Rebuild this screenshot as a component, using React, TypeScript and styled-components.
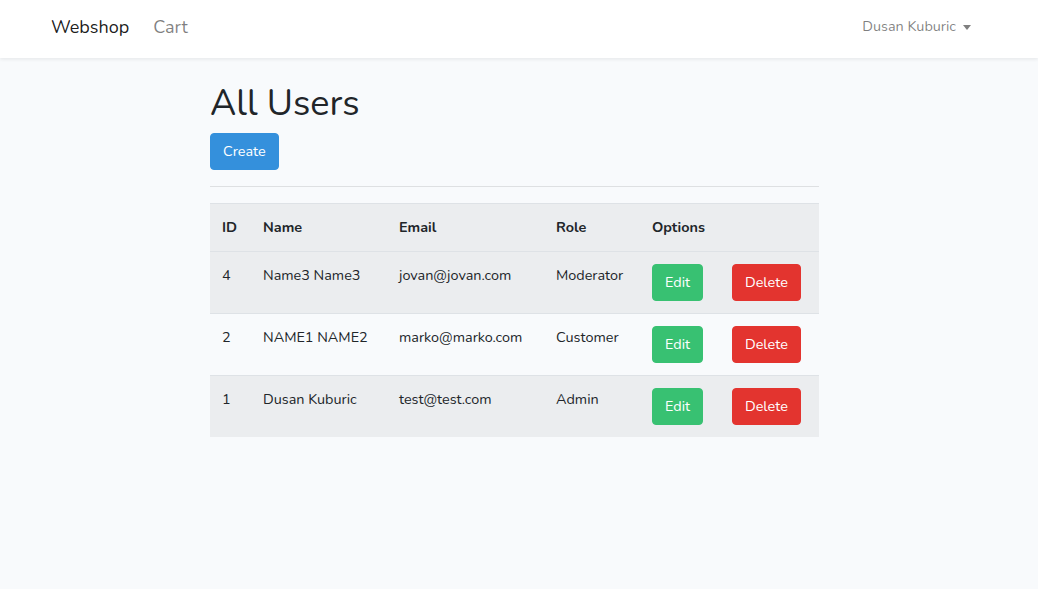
import React from "react";
import styled, {createGlobalStyle} from "styled-components";

const GlobalStyle = createGlobalStyle`
  html, body {
    margin: 0;
    padding: 0;
    background: #f8fafc;
    font-family: "Nunito", Lato, "Open Sans", sans-serif;
    font-size: 14.4px;
    line-height: 1.6;
    color: #212529;
  }
  * {
    box-sizing: border-box;
  }
`

interface IUser {
  id: number;
  name: string;
  email: string;
  role: string;
}

const users: IUser[] = [
  {id: 4, name: "Name3 Name3", email: "jovan@jovan.com", role: "Moderator"},
  {id: 2, name: "NAME1 NAME2", email: "marko@marko.com", role: "Customer"},
  {id: 1, name: "Dusan Kuburic", email: "test@test.com", role: "Admin"},
];

const columns = [41, 136, 157, 96, 80, 99];

const App = () => {
  return (
    <>
      <GlobalStyle/>
      <Navbar>
        <NavLeft>
          <Brand href="/">Webshop</Brand>
          <NavBig href="/">Cart</NavBig>
        </NavLeft>
        <UserMenu>
          Dusan Kuburic
          <Caret/>
        </UserMenu>
      </Navbar>
      <Main>
        <Content>
          <Title>All Users</Title>
          <Button variant="primary">Create</Button>
          <Divider/>
          <Table>
            <colgroup>
              {columns.map((w, i) => <col key={i} style={{width: w}}/>)}
            </colgroup>
            <thead>
              <tr>
                <Th>ID</Th>
                <Th>Name</Th>
                <Th>Email</Th>
                <Th>Role</Th>
                <Th>Options</Th>
                <Th/>
              </tr>
            </thead>
            <tbody>
              {users.map((u, i) => (
                <Row key={u.id} striped={i % 2 === 0}>
                  <Td>{u.id}</Td>
                  <Td>{u.name}</Td>
                  <Td>{u.email}</Td>
                  <Td>{u.role}</Td>
                  <Td><Button variant="success">Edit</Button></Td>
                  <Td><Button variant="danger">Delete</Button></Td>
                </Row>
              ))}
            </tbody>
          </Table>
        </Content>
      </Main>
    </>
  )
}

export default App;


const Navbar = styled.nav`
  height: 58px;
  background: #fff;
  box-shadow: 0 0.125rem 0.25rem rgba(0, 0, 0, 0.075);
  display: flex;
  align-items: center;
  justify-content: space-between;
  padding: 0 67px 4px 51px;
`

const NavLeft = styled.div`
  display: flex;
  align-items: center;
`

const Brand = styled.a`
  font-size: 18px;
  color: rgba(0, 0, 0, 0.9);
  text-decoration: none;
  margin-right: 24px;
`

const NavBig = styled.a`
  font-size: 18px;
  color: rgba(0, 0, 0, 0.5);
  text-decoration: none;
`

const UserMenu = styled.div`
  display: flex;
  align-items: center;
  color: rgba(0, 0, 0, 0.5);
`

const Caret = styled.span`
  display: inline-block;
  margin-left: 7px;
  margin-top: 1px;
  border-top: 5px solid rgba(0, 0, 0, 0.5);
  border-left: 4.5px solid transparent;
  border-right: 4.5px solid transparent;
`

const Main = styled.main`
  padding: 24px 0;
`

const Content = styled.div`
  width: 609px;
  margin-left: 210px;
`

const Title = styled.h1`
  margin: 0 0 8px;
  font-size: 36px;
  font-weight: 400;
  line-height: 1.2;
`

const colors = {
  primary: "#3490dc",
  success: "#38c172",
  danger: "#e3342f",
}

const Button = styled.button<{variant: keyof typeof colors}>`
  display: inline-block;
  font-family: inherit;
  font-size: 14.4px;
  line-height: 1.6;
  padding: 6px 12px;
  border: 1px solid ${({variant}) => colors[variant]};
  border-radius: 4px;
  background: ${({variant}) => colors[variant]};
  color: #fff;
  cursor: pointer;
`

const Divider = styled.hr`
  margin: 16px 0;
  border: 0;
  border-top: 1px solid rgba(0, 0, 0, 0.1);
`

const Table = styled.table`
  width: 609px;
  table-layout: fixed;
  border-collapse: collapse;
  background: transparent;
`

const Th = styled.th`
  text-align: left;
  font-weight: 700;
  padding: 12px;
  border-top: 1px solid #dee2e6;
  background: #ebedef;
  vertical-align: top;
`

const Row = styled.tr<{striped: boolean}>`
  background: ${({striped}) => striped ? "#ebedef" : "transparent"};
`

const Td = styled.td`
  padding: 12px;
  border-top: 1px solid #dee2e6;
  vertical-align: top;
  white-space: nowrap;
`
